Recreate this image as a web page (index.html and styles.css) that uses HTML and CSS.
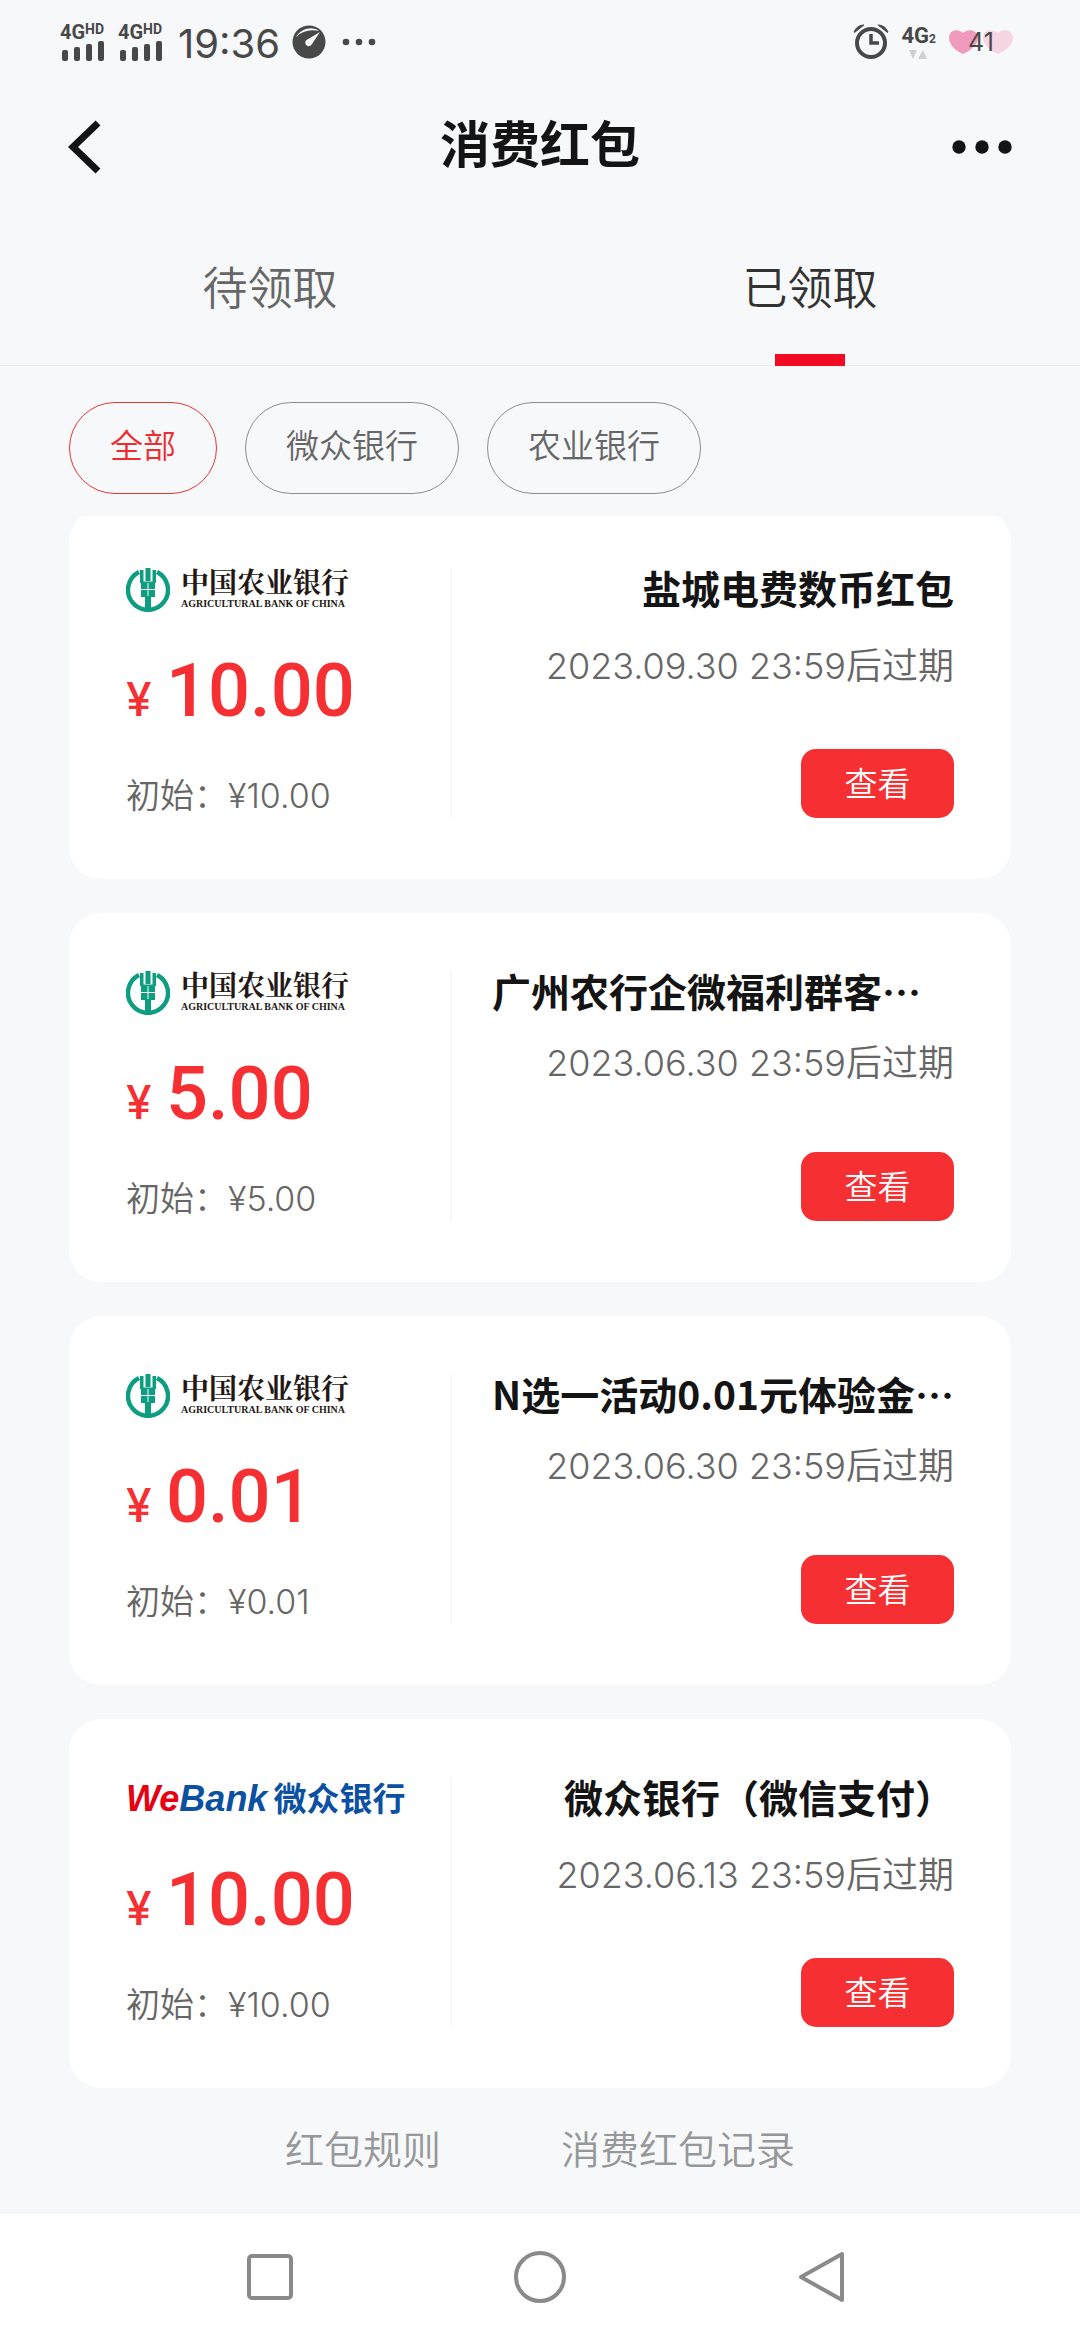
FILE: index.html
```
<!DOCTYPE html>
<html lang="zh-CN">
<head>
    <meta charset="UTF-8">
    <meta name="viewport" content="width=device-width, initial-scale=1.0">
    <title>消费红包</title>
    <link rel="stylesheet" href="styles.css">
</head>
<body>
    <!-- shared logo mark -->
    <svg class="defs" width="0" height="0">
        <symbol id="abc-mark" viewBox="0 0 44 44">
            <path d="M13 4A20 20 0 1 0 31 4" fill="none" stroke="#0d9d81" stroke-width="4.500"/>
            <path d="M14 2v13h16V2h-3.500v11.500h-9V2z" fill="#0d9d81"/>
            <path d="M19.500 0h5v13h-5z" fill="#0d9d81"/>
            <path d="M15 14h6.500v7H15zM22.500 14H29v7h-6.500zM15 22h6.500v7H15zM22.500 22H29v7h-6.500z" fill="#0d9d81"/>
            <path d="M19 28h6v14h-6z" fill="#0d9d81"/>
        </symbol>
    </svg>

    <div class="status-bar">
        <div class="status-left">
            <div class="signal">
                <div class="net">4G<small>HD</small></div>
                <svg width="44" height="20" viewBox="0 0 44 20" fill="#484848"><rect x="0" y="9" width="6" height="11" rx="2"/><rect x="12" y="6" width="6" height="14" rx="2"/><rect x="24" y="3" width="6" height="17" rx="2"/><rect x="36" y="0" width="6" height="20" rx="2"/></svg>
            </div>
            <div class="signal">
                <div class="net">4G<small>HD</small></div>
                <svg width="44" height="20" viewBox="0 0 44 20" fill="#484848"><rect x="0" y="9" width="6" height="11" rx="2"/><rect x="12" y="6" width="6" height="14" rx="2"/><rect x="24" y="3" width="6" height="17" rx="2"/><rect x="36" y="0" width="6" height="20" rx="2"/></svg>
            </div>
            <span class="time">19:36</span>
            <svg width="34" height="34" viewBox="0 0 34 34"><circle cx="17" cy="17" r="16.500" fill="#484848"/><path d="M4 12C9 3 21 1 27 6C18 4 10 6 4 12z" fill="#f7f8fa"/><path d="M28 7L14.500 15A3.500 3.500 0 1 0 20 19z" fill="#f7f8fa"/></svg>
            <svg class="more" width="34" height="8" viewBox="0 0 34 8" fill="#484848"><circle cx="4" cy="4" r="3.300"/><circle cx="17" cy="4" r="3.300"/><circle cx="30" cy="4" r="3.300"/></svg>
        </div>
        <div class="status-right">
            <svg width="36" height="36" viewBox="0 0 36 36" fill="none" stroke="#484848"><circle cx="18" cy="19" r="14" stroke-width="4"/><path d="M18 10v9h8" stroke-width="3.500"/><path d="M1 8Q4 1 11 1L1.500 8.500zM35 8Q32 1 25 1L34.500 8.500z" fill="#484848" stroke-width="1"/></svg>
            <div class="data">
                <div class="net-data">4G<sub>2</sub></div>
                <svg width="18" height="9" viewBox="0 0 18 9" fill="#cfcfcf"><path d="M0 0h8l-4 9zM9 9h9l-4-9z"/></svg>
            </div>
            <div class="battery">
                <svg width="66" height="26" viewBox="0 0 66 26">
                    <path d="M15 25C8 22 1 16 1 9C1 1 10-1 15 4C20-1 30 1 30 9C30 16 22 22 15 25z" fill="#f09abd"/>
                    <path d="M50 25C43 22 35 16 35 9C35 1 44-1 50 4C55-1 65 1 65 9C65 16 57 22 50 25z" fill="#f8d5e4"/>
                </svg>
                <span>41</span>
            </div>
        </div>
    </div>

    <header class="navbar">
        <button class="icon-btn" aria-label="返回">
            <svg width="34" height="54" viewBox="0 0 34 54"><path d="M30 3L5 27L30 51" fill="none" stroke="#141414" stroke-width="7"/></svg>
        </button>
        <h1>消费红包</h1>
        <button class="icon-btn" aria-label="更多">
            <svg width="60" height="14" viewBox="0 0 60 14" fill="#141414"><circle cx="7" cy="7" r="6.700"/><circle cx="30" cy="7" r="6.700"/><circle cx="53" cy="7" r="6.700"/></svg>
        </button>
    </header>

    <nav class="tabs">
        <button class="tab">待领取</button>
        <button class="tab active">已领取</button>
    </nav>

    <div class="filters">
        <button class="chip selected">全部</button>
        <button class="chip">微众银行</button>
        <button class="chip">农业银行</button>
    </div>

    <main class="list">
        <section class="card">
            <div class="left">
                <div class="logo">
                    <svg width="44" height="44"><use href="#abc-mark"/></svg>
                    <div class="abc">中国农业银行<small>AGRICULTURAL BANK OF CHINA</small></div>
                </div>
                <div class="amount"><i>¥</i>10.00</div>
                <div class="initial">初始：¥10.00</div>
            </div>
            <div class="right">
                <h2>盐城电费数币红包</h2>
                <p>2023.09.30 23:59后过期</p>
                <button class="view">查看</button>
            </div>
        </section>

        <section class="card">
            <div class="left">
                <div class="logo">
                    <svg width="44" height="44"><use href="#abc-mark"/></svg>
                    <div class="abc">中国农业银行<small>AGRICULTURAL BANK OF CHINA</small></div>
                </div>
                <div class="amount"><i>¥</i>5.00</div>
                <div class="initial">初始：¥5.00</div>
            </div>
            <div class="right">
                <h2 class="long">广州农行企微福利群客…</h2>
                <p>2023.06.30 23:59后过期</p>
                <button class="view">查看</button>
            </div>
        </section>

        <section class="card">
            <div class="left">
                <div class="logo">
                    <svg width="44" height="44"><use href="#abc-mark"/></svg>
                    <div class="abc">中国农业银行<small>AGRICULTURAL BANK OF CHINA</small></div>
                </div>
                <div class="amount"><i>¥</i>0.01</div>
                <div class="initial">初始：¥0.01</div>
            </div>
            <div class="right">
                <h2 class="long">N选一活动0.01元体验金…</h2>
                <p>2023.06.30 23:59后过期</p>
                <button class="view">查看</button>
            </div>
        </section>

        <section class="card">
            <div class="left">
                <div class="logo webank">
                    <span class="en"><b>We</b>Bank</span>
                    <span class="cn">微众银行</span>
                </div>
                <div class="amount"><i>¥</i>10.00</div>
                <div class="initial">初始：¥10.00</div>
            </div>
            <div class="right">
                <h2>微众银行（微信支付）</h2>
                <p>2023.06.13 23:59后过期</p>
                <button class="view">查看</button>
            </div>
        </section>
    </main>

    <footer class="links">
        <a href="#">红包规则</a>
        <a href="#">消费红包记录</a>
    </footer>

    <div class="sys-nav">
        <button class="icon-btn" aria-label="最近任务">
            <svg width="52" height="52" viewBox="0 0 52 52" fill="none" stroke="#8a8a8a" stroke-width="4"><rect x="5" y="5" width="42" height="42" rx="3"/></svg>
        </button>
        <button class="icon-btn" aria-label="主页">
            <svg width="52" height="52" viewBox="0 0 52 52" fill="none" stroke="#8a8a8a" stroke-width="4"><circle cx="26" cy="26" r="24"/></svg>
        </button>
        <button class="icon-btn" aria-label="后退">
            <svg width="72" height="52" viewBox="-22 0 72 52" fill="none" stroke="#8a8a8a" stroke-width="4" stroke-linejoin="round"><path d="M46 3v46L5 26z"/></svg>
        </button>
    </div>
</body>
</html>
```
FILE: styles.css
```
* {
    box-sizing: border-box;
}
body {
    margin: 0;
    min-height: 100vh;
    display: flex;
    flex-direction: column;
    background-color: #f7f8fa;
    color: #666;
    font-family: Inter, "Noto Sans CJK SC", sans-serif;
    font-weight: 350;
}
button {
    margin: 0;
    padding: 0;
    border: 0;
    background: none;
    color: inherit;
    font: inherit;
}
svg {
    display: block;
}
.defs {
    position: absolute;
}

/* status bar */
.status-bar {
    display: flex;
    justify-content: space-between;
    height: 84px;
    padding: 0 66px 0 60px;
    color: #484848;
}
.status-left, .status-right {
    display: flex;
    align-items: center;
    gap: 12px;
}
.signal {
    width: 46px;
    padding-left: 2px;
}
.net {
    display: flex;
    margin: 0 0 1px -2px;
    font: bold 20px/16px Roboto, sans-serif;
}
.net small {
    font-size: 14px;
    line-height: 10px;
}
.time {
    font-size: 40px;
    font-weight: 400;
    line-height: 48px;
    margin: 4px 0 0 2px;
}
.more {
    margin-left: 4px;
}
.data svg {
    margin: 4px 0 0 8px;
}
.net-data {
    font: bold 22px/20px Roboto, sans-serif;
}
.net-data sub {
    font-size: 12px;
    line-height: 10px;
    vertical-align: baseline;
}
.battery {
    position: relative;
}
.battery span {
    position: absolute;
    inset: 0;
    text-align: center;
    font-size: 25px;
    font-weight: 400;
    line-height: 26px;
}

/* title and tabs */
.navbar {
    display: flex;
    justify-content: space-between;
    align-items: center;
    height: 126px;
    padding: 0 68px;
}
.navbar .icon-btn {
    display: flex;
    width: 60px;
}
h1 {
    margin: 0;
    padding-bottom: 4px;
    color: #141414;
    font-size: 50px;
    line-height: 72px;
    font-weight: 700;
}
.tabs {
    display: grid;
    grid-template-columns: 1fr 1fr;
    height: 156px;
    border-bottom: 1px solid #ebedf0;
}
.tab {
    position: relative;
    padding-bottom: 4px;
    font-size: 45px;
}
.tab.active {
    color: #323233;
}
.tab.active::after {
    content: "";
    position: absolute;
    left: 50%;
    bottom: -1px;
    width: 70px;
    height: 12px;
    margin-left: -35px;
    background-color: #f20a24;
}

/* bank filter */
.filters {
    display: flex;
    gap: 28px;
    padding: 36px 69px 22px;
}
.chip {
    height: 92px;
    padding: 0 40px 8px;
    border: 1px solid #8c8d90;
    border-radius: 46px;
    font-size: 33px;
}
.chip.selected {
    color: #ee2c30;
    border-color: #e8343a;
}

/* red packet cards */
.list {
    display: flex;
    flex-direction: column;
    gap: 34px;
    margin: 0 69px;
    overflow: hidden;
}
.card {
    display: grid;
    grid-template-columns: 326px minmax(0, 1fr);
    padding: 58px 57px 61px;
    background-color: #fff;
    border-radius: 32px;
}
.card:first-child {
    margin-top: -6px;
}
.left {
    display: flex;
    flex-direction: column;
    justify-content: space-between;
    height: 250px;
    border-right: 2px solid #f7f8fa;
}
.logo {
    display: flex;
    align-items: center;
    gap: 11px;
    height: 44px;
    white-space: nowrap;
}
.abc {
    color: #231815;
    font: bold 28px/28px "Noto Serif CJK SC", "Noto Sans CJK SC", serif;
}
.abc small {
    display: block;
    font: bold 10px/18px "Liberation Serif", serif;
}
.webank {
    gap: 6px;
    color: #0c51a1;
    font-weight: bold;
}
.webank .en {
    font: italic bold 36px/44px "Liberation Sans", sans-serif;
}
.webank b {
    color: #e60012;
}
.webank .cn {
    font-size: 33px;
    line-height: 44px;
}
.amount {
    display: flex;
    align-items: baseline;
    height: 94px;
    color: #f52f32;
    font: 500 74px/90px Roboto, sans-serif;
}
.amount i {
    width: 40px;
    font: 500 46px/50px Inter, sans-serif;
}
.initial {
    font-size: 34px;
    line-height: 44px;
}
.right {
    display: flex;
    flex-direction: column;
    align-items: flex-end;
    padding-left: 40px;
    white-space: nowrap;
}
h2 {
    margin: 0 0 38px;
    color: #141414;
    font: 700 39px/38px "Noto Sans CJK SC", sans-serif;
}
h2.long {
    align-self: flex-start;
    margin-bottom: 32px;
}
p {
    margin: 0;
    font-size: 36px;
    line-height: 44px;
}
.view {
    width: 153px;
    height: 69px;
    margin-top: auto;
    padding-bottom: 3px;
    border-radius: 15px;
    background-color: #f52f32;
    color: #fff;
    font-size: 33px;
}

/* footer */
.links {
    display: flex;
    justify-content: center;
    align-items: center;
    gap: 120px;
    flex: 1;
    padding-bottom: 8px;
}
.links a {
    color: #969799;
    font-size: 39px;
    text-decoration: none;
}
.sys-nav {
    display: grid;
    grid-template-columns: repeat(3, 1fr);
    height: 126px;
    padding: 0 12.5%;
    background-color: #fff;
}
.sys-nav .icon-btn {
    display: flex;
    justify-content: center;
    align-items: center;
}
```
